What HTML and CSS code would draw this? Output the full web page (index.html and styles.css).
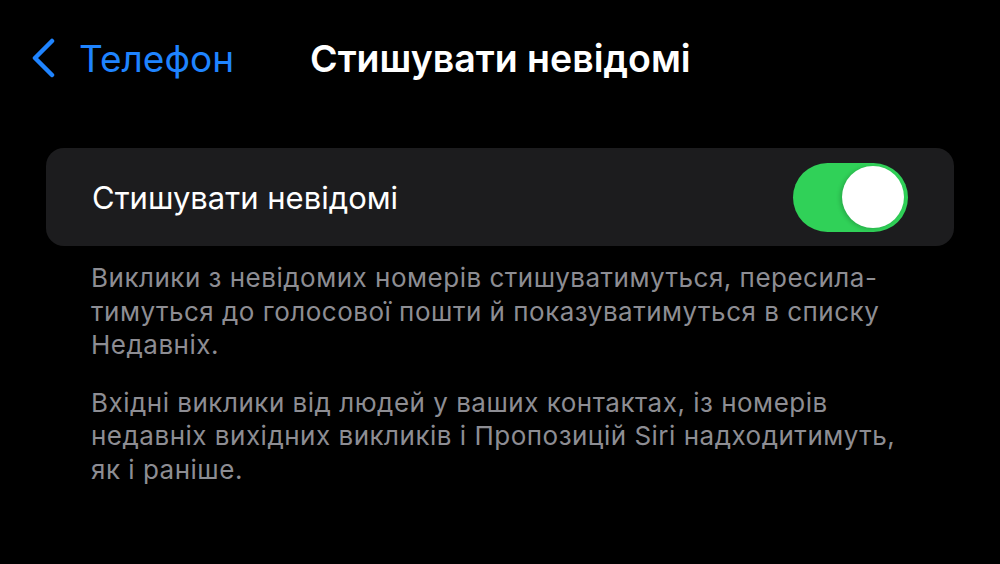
FILE: index.html
```html
<!DOCTYPE html>
<html lang="uk">
<head>
<meta charset="utf-8">
<link rel="stylesheet" href="styles.css">
<title>Стишувати невідомі</title>
</head>
<body>
<div class="screen">
  <header class="navbar">
    <a class="back">
      <svg class="chevron" width="26" height="40" viewBox="0 0 26 40">
        <path d="M22 3 L5 20 L22 37" fill="none" stroke="#1f84ff" stroke-width="4.5" stroke-linecap="round" stroke-linejoin="round"/>
      </svg>
      <span class="back-label">Телефон</span>
    </a>
    <h1 class="title">Стишувати невідомі</h1>
  </header>

  <section class="group">
    <div class="row">
      <span class="row-label">Стишувати невідомі</span>
      <span class="switch on"><span class="knob"></span></span>
    </div>
  </section>

  <div class="footer">
    <p>Виклики з невідомих номерів стишуватимуться, пересила-<br>тимуться до голосової пошти й показуватимуться в списку<br>Недавніх.</p>
    <p>Вхідні виклики від людей у ваших контактах, із номерів<br>недавніх вихідних викликів і Пропозицій Siri надходитимуть,<br>як і раніше.</p>
  </div>
</div>
</body>
</html>
```
FILE: styles.css
```css
* { box-sizing: border-box; }
html, body { margin: 0; padding: 0; background: #000; }
body {
  font-family: Inter, Roboto, "Noto Sans", sans-serif;
  color: #fff;
  width: 1000px;
  height: 564px;
  overflow: hidden;
}
.screen {
  padding: 0 46px;
}
.navbar {
  display: flex;
  align-items: center;
  height: 116px;
}
.back {
  display: flex;
  align-items: center;
  gap: 23px;
  margin-left: -16px;
  color: #1f84ff;
}
.back-label {
  font-size: 37px;
}
.title {
  margin: 0 0 0 76px;
  font-size: 37.5px;
  font-weight: 600;
}
.group {
  margin-top: 32px;
  background: #1c1c1e;
  border-radius: 18px;
  height: 98px;
}
.row {
  display: flex;
  align-items: center;
  justify-content: space-between;
  height: 100%;
  padding: 0 46px 0 46px;
}
.row-label {
  font-size: 31px;
}
.switch {
  width: 115px;
  height: 69px;
  border-radius: 35px;
  background: #30d158;
  display: flex;
  align-items: center;
  justify-content: flex-end;
  padding-right: 4px;
}
.knob {
  width: 62px;
  height: 62px;
  border-radius: 50%;
  background: #fff;
  box-shadow: -2px 1px 4px rgba(0,0,0,0.18);
}
.footer {
  padding: 15px 45px 0;
  color: #8d8d93;
  font-size: 26px;
  letter-spacing: 0.5px;
  line-height: 33.5px;
}
.footer p {
  margin: 0 0 24px;
}
```
